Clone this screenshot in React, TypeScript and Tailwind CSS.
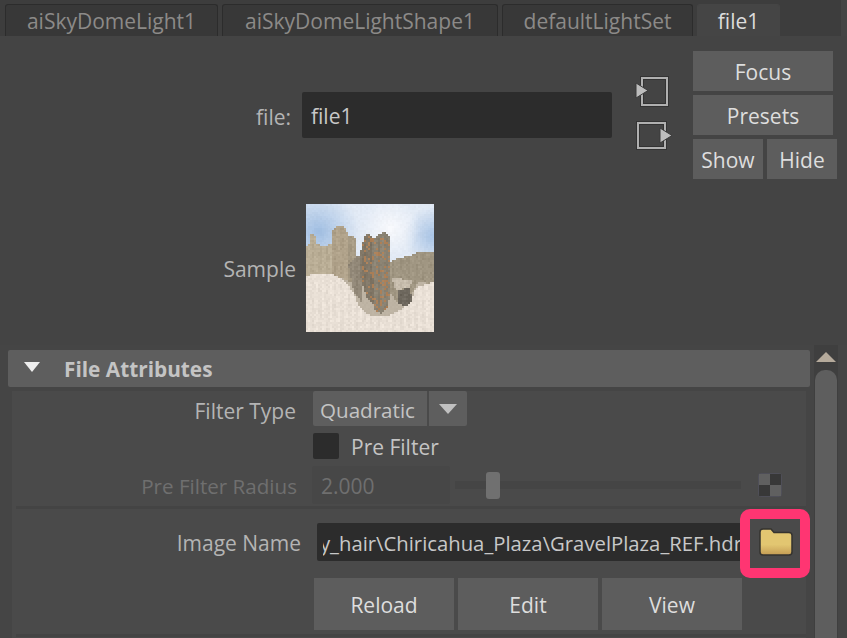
const font = "font-['Open_Sans',sans-serif]";

function Tab({ label, width, active }: { label: string; width: string; active?: boolean }) {
  return (
    <div
      className={`${width} h-8 flex items-center justify-center pt-[2px] rounded-t-[3px] border-t border-x text-[21px] ${
        active ? "bg-[#454545] border-[#454545] text-[#dcdcdc]" : "bg-[#383838] border-[#2c2c2c] text-[#8c8a88]"
      }`}
    >
      {label}
    </div>
  );
}

function SideButton({ label, className }: { label: string; className: string }) {
  return (
    <button className={`h-10 pt-[2px] bg-[#5d5d5d] text-[21px] text-[#dedede] flex items-center justify-center ${className}`}>
      {label}
    </button>
  );
}

function InputIcon() {
  return (
    <svg width="40" height="36" viewBox="0 0 40 36">
      <rect x="8" y="4" width="25" height="27" fill="none" stroke="#333" strokeWidth="4" />
      <rect x="8" y="4" width="25" height="27" fill="none" stroke="#b0b0b0" strokeWidth="2" />
      <path d="M2 9 L14 16.5 L2 24 Z" fill="#bdbdbd" stroke="#3a3a3a" strokeWidth="1" />
    </svg>
  );
}

function OutputIcon() {
  return (
    <svg width="40" height="36" viewBox="0 0 40 36">
      <rect x="4" y="5" width="27" height="25" fill="none" stroke="#333" strokeWidth="4" />
      <rect x="4" y="5" width="27" height="25" fill="none" stroke="#b0b0b0" strokeWidth="2" />
      <path d="M26 10 L38 17.5 L26 25 Z" fill="#bdbdbd" stroke="#3a3a3a" strokeWidth="1" />
    </svg>
  );
}

type Pt = [number, number];
type Rgb = [number, number, number];

const hash = (x: number, y: number) => {
  const v = Math.sin(x * 12.9898 + y * 78.233) * 43758.5453;
  return v - Math.floor(v);
};
const mix = (a: Rgb, b: Rgb, t: number): Rgb => {
  const k = Math.max(0, Math.min(1, t));
  return [a[0] + (b[0] - a[0]) * k, a[1] + (b[1] - a[1]) * k, a[2] + (b[2] - a[2]) * k];
};
const inside = (poly: Pt[], x: number, y: number) => {
  let hit = false;
  for (let i = 0, j = poly.length - 1; i < poly.length; j = i++) {
    const [xi, yi] = poly[i];
    const [xj, yj] = poly[j];
    if (yi > y !== yj > y && x < ((xj - xi) * (y - yi)) / (yj - yi) + xi) hit = !hit;
  }
  return hit;
};

// rock and ground masses of the swatch, in paint order
const shapes: { poly: Pt[]; color: Rgb; rust?: number }[] = [
  { poly: [[0, 44], [3, 40], [4, 31], [9, 31], [10, 40], [18, 42], [26, 40], [26, 72], [0, 74]], color: [186, 174, 150] },
  { poly: [[26, 27], [30, 23], [39, 23], [42, 30], [42, 76], [26, 72]], color: [176, 162, 138] },
  { poly: [[43, 33], [48, 31], [50, 36], [51, 76], [43, 78]], color: [166, 154, 132] },
  { poly: [[42, 60], [57, 48], [57, 100], [48, 88]], color: [146, 136, 120] },
  { poly: [[82, 60], [92, 54], [104, 52], [113, 48], [128, 47], [128, 80], [112, 78], [106, 90], [90, 98], [82, 84]], color: [160, 150, 130] },
  { poly: [[55, 46], [58, 33], [62, 30], [67, 33], [70, 60], [70, 104], [60, 92], [54, 70]], color: [130, 120, 104], rust: 0.16 },
  { poly: [[66, 38], [72, 30], [80, 28], [84, 34], [85, 80], [82, 104], [76, 110], [68, 106]], color: [140, 132, 116], rust: 0.2 },
  { poly: [[92, 86], [104, 84], [106, 96], [100, 103], [93, 100]], color: [110, 104, 94] },
  { poly: [[86, 74], [106, 76], [104, 84], [90, 86]], color: [200, 190, 174] },
  {
    poly: [[0, 72], [12, 69], [26, 70], [38, 76], [47, 88], [54, 104], [66, 113], [80, 113], [94, 106], [104, 100], [110, 84], [128, 78], [128, 128], [0, 128]],
    color: [233, 224, 214],
  },
];

const cells = (() => {
  const out: { x: number; y: number; fill: string }[] = [];
  for (let gy = 0; gy < 64; gy++) {
    for (let gx = 0; gx < 64; gx++) {
      const x = gx * 2 + 1;
      const y = gy * 2 + 1;
      const n = hash(gx, gy);
      // sky: white bloom in the middle, blue towards both sides
      let c = mix([160, 190, 226], [226, 234, 245], Math.hypot(x - 12, y - 28) / 42);
      c = mix([166, 194, 228], c, Math.hypot(x - 128, y - 32) / 30);
      c = mix([248, 249, 252], c, Math.hypot(x - 84, y - 24) / 30);
      if (y > 60) c = [190, 180, 164];
      let hit = false;
      for (const s of shapes) {
        if (!inside(s.poly, x, y)) continue;
        hit = true;
        c = s.color;
        if (s.rust && n > 1 - s.rust) c = [168, 124, 84];
      }
      const amp = hit ? 14 : 5;
      const d = (n - 0.5) * amp + (hit ? Math.sin(gx * 1.7) * 4 : 0);
      out.push({ x: gx * 2, y: gy * 2, fill: `rgb(${c[0] + d | 0},${c[1] + d | 0},${c[2] + d | 0})` });
    }
  }
  return out;
})();

function Thumbnail() {
  return (
    <svg width="128" height="128" viewBox="0 0 128 128" shapeRendering="crispEdges">
      {cells.map((c) => (
        <rect key={`${c.x}-${c.y}`} x={c.x} y={c.y} width="2" height="2" fill={c.fill} />
      ))}
    </svg>
  );
}

function FolderIcon() {
  return (
    <svg width="34" height="28" viewBox="0 0 34 28">
      <defs>
        <linearGradient id="folder" x1="0" y1="0" x2="0" y2="1">
          <stop offset="0.6" stopColor="#e2c671" />
          <stop offset="1" stopColor="#c49c54" />
        </linearGradient>
      </defs>
      <path
        d="M1 4 Q1 1 4 1 L12 1 L15 4.5 L30 4.5 Q33 4.5 33 7.5 L33 24 Q33 27 30 27 L4 27 Q1 27 1 24 Z"
        fill="url(#folder)"
        stroke="#35332f"
        strokeWidth="1.5"
      />
    </svg>
  );
}

export default function App() {
  return (
    <div className={`${font} relative w-[847px] h-[638px] overflow-hidden bg-[#454545] leading-none`}>
      <div className="w-[841px] h-9 bg-[#3d3d3d] flex items-end gap-1 pl-[5px]">
        <Tab label="aiSkyDomeLight1" width="w-[213px]" />
        <Tab label="aiSkyDomeLightShape1" width="w-[276px]" />
        <Tab label="defaultLightSet" width="w-[191px]" />
        <Tab label="file1" width="w-[83px]" active />
      </div>

      <div className="h-[309px] bg-[#444444]">
        <div className="flex items-start h-[168px]">
          <span className="w-[291px] mt-[71px] text-right text-[21px] text-[#b4b4b4]">file:</span>
          <div className="w-[310px] h-[46px] ml-[11px] mt-14 pt-[2px] bg-[#2c2c2c] rounded-[2px] flex items-center pl-[9px] text-[21px] text-[#c8c8c8]">
            file1
          </div>
          <div className="w-10 ml-[22px] mt-[38px] flex flex-col gap-2">
            <InputIcon />
            <OutputIcon />
          </div>
          <div className="ml-[19px] mt-[15px] flex flex-col gap-1 w-[144px]">
            <SideButton label="Focus" className="w-[140px]" />
            <SideButton label="Presets" className="w-[140px]" />
            <div className="flex gap-1">
              <SideButton label="Show" className="w-[70px]" />
              <SideButton label="Hide" className="w-[70px]" />
            </div>
          </div>
        </div>
        <div className="flex items-center">
          <span className="w-[296px] pt-[2px] text-right text-[21px] text-[#b4b4b4]">Sample</span>
          <div className="ml-[10px]">
            <Thumbnail />
          </div>
        </div>
      </div>

      <div className="flex h-[293px]">
        <div className="w-[814px] pl-2 pt-[5px]">
          <div className="w-[802px] h-[37px] bg-[#5e5e5e] rounded-[2px] flex items-center pl-4">
            <svg width="16" height="10" viewBox="0 0 16 10" className="mb-[3px]">
              <path d="M0 0 H16 L8 10 Z" fill="#eeeeee" />
            </svg>
            <span className="ml-6 pt-[2px] text-[20.8px] font-bold text-[#c4c4c4]">File Attributes</span>
          </div>
          <div className="ml-1 mt-1 w-[794px] h-[260px] bg-[#4a4a4a]">
            <div className="flex h-[42px] items-start">
              <span className="w-[284px] mt-[10px] text-right text-[21px] text-[#b4b4b4]">Filter Type</span>
              <div className="ml-[17px] flex h-[35px] text-[20.6px] text-[#c4c4c4]">
                <div className="w-[114px] pt-1 bg-[#5e5e5e] rounded-l-[2px] flex items-center pl-[7px]">Quadratic</div>
                <div className="w-[38px] ml-[2px] bg-[#5e5e5e] rounded-r-[2px] flex items-center justify-center">
                  <svg width="18" height="10" viewBox="0 0 18 10">
                    <path d="M0 0 H18 L9 10 Z" fill="#c0c0c0" />
                  </svg>
                </div>
              </div>
            </div>
            <div className="flex h-[33px] items-start pl-[301px]">
              <div className="w-[26px] h-[26px] bg-[#2c2c2c] rounded-[2px]" />
              <span className="ml-3 mt-1 text-[21px] text-[#c4c4c4]">Pre Filter</span>
            </div>
            <div className="flex h-[38px] items-center">
              <span className="w-[285px] pt-[2px] text-right text-[20.6px] text-[#6f6f6f]">Pre Filter Radius</span>
              <div className="ml-[15px] w-[138px] h-[38px] pt-[2px] bg-[#474747] rounded-[2px] flex items-center pl-[9px] text-[21px] text-[#6f6f6f]">
                2.000
              </div>
              <div className="relative ml-[5px] w-[286px] h-2 bg-[#454545]">
                <div className="absolute left-[31px] top-[-9px] w-[14px] h-[27px] rounded-[3px] bg-[#707070]" />
              </div>
              <svg width="24" height="24" viewBox="0 0 24 24" className="ml-[17px]">
                <rect x="0.5" y="0.5" width="23" height="23" rx="2" fill="#4c4c50" stroke="#4f4f58" />
                <rect x="1" y="1" width="11" height="11" fill="#606060" />
                <rect x="12" y="1" width="11" height="11" fill="#383838" />
                <rect x="1" y="12" width="11" height="11" fill="#383838" />
                <rect x="12" y="12" width="11" height="11" fill="#606060" />
              </svg>
            </div>
            <div className="h-[3px] ml-1 mt-[2px] bg-[#444444]" />
            <div className="flex h-[66px] items-center">
              <span className="w-[289px] pt-[2px] text-right text-[21px] text-[#b4b4b4]">Image Name</span>
              <div className="ml-4 w-[423px] h-[38px] pl-[6px] bg-[#2c2c2c] rounded-l-[2px] flex items-center">
                <div className="w-full h-full overflow-hidden flex justify-end items-center pt-[2px] text-[20.3px] text-[#c8c8c8]">
                  <span className="whitespace-nowrap shrink-0 mr-[-2px]">y_hair\Chiricahua_Plaza\GravelPlaza_REF.hdr</span>
                </div>
              </div>
              <div className="ml-[19px]">
                <FolderIcon />
              </div>
            </div>
            <div className="flex gap-1 pl-[302px] mt-[3px]">
              <SideButton label="Reload" className="w-[140px] !h-[52px]" />
              <SideButton label="Edit" className="w-[140px] !h-[52px]" />
              <SideButton label="View" className="w-[140px] !h-[52px]" />
            </div>
            <div className="h-[3px] ml-1 mt-1 bg-[#444444]" />
          </div>
        </div>
        <div className="w-6 bg-[#3f3f3f] flex flex-col items-center">
          <svg width="20" height="10" viewBox="0 0 20 10" className="mt-[7px]">
            <path d="M10 0 L20 10 H0 Z" fill="#b5aa9b" />
          </svg>
          <div className="mt-2 w-[22px] flex-1 bg-[#5e5e5e] rounded-t-[10px]" />
        </div>
      </div>

      {/* callout drawn over the browse button */}
      <div className="absolute left-[740px] top-[509px] w-[70px] h-[69px] rounded-[10px] border-10 border-[#ff3572]" />
    </div>
  );
}
